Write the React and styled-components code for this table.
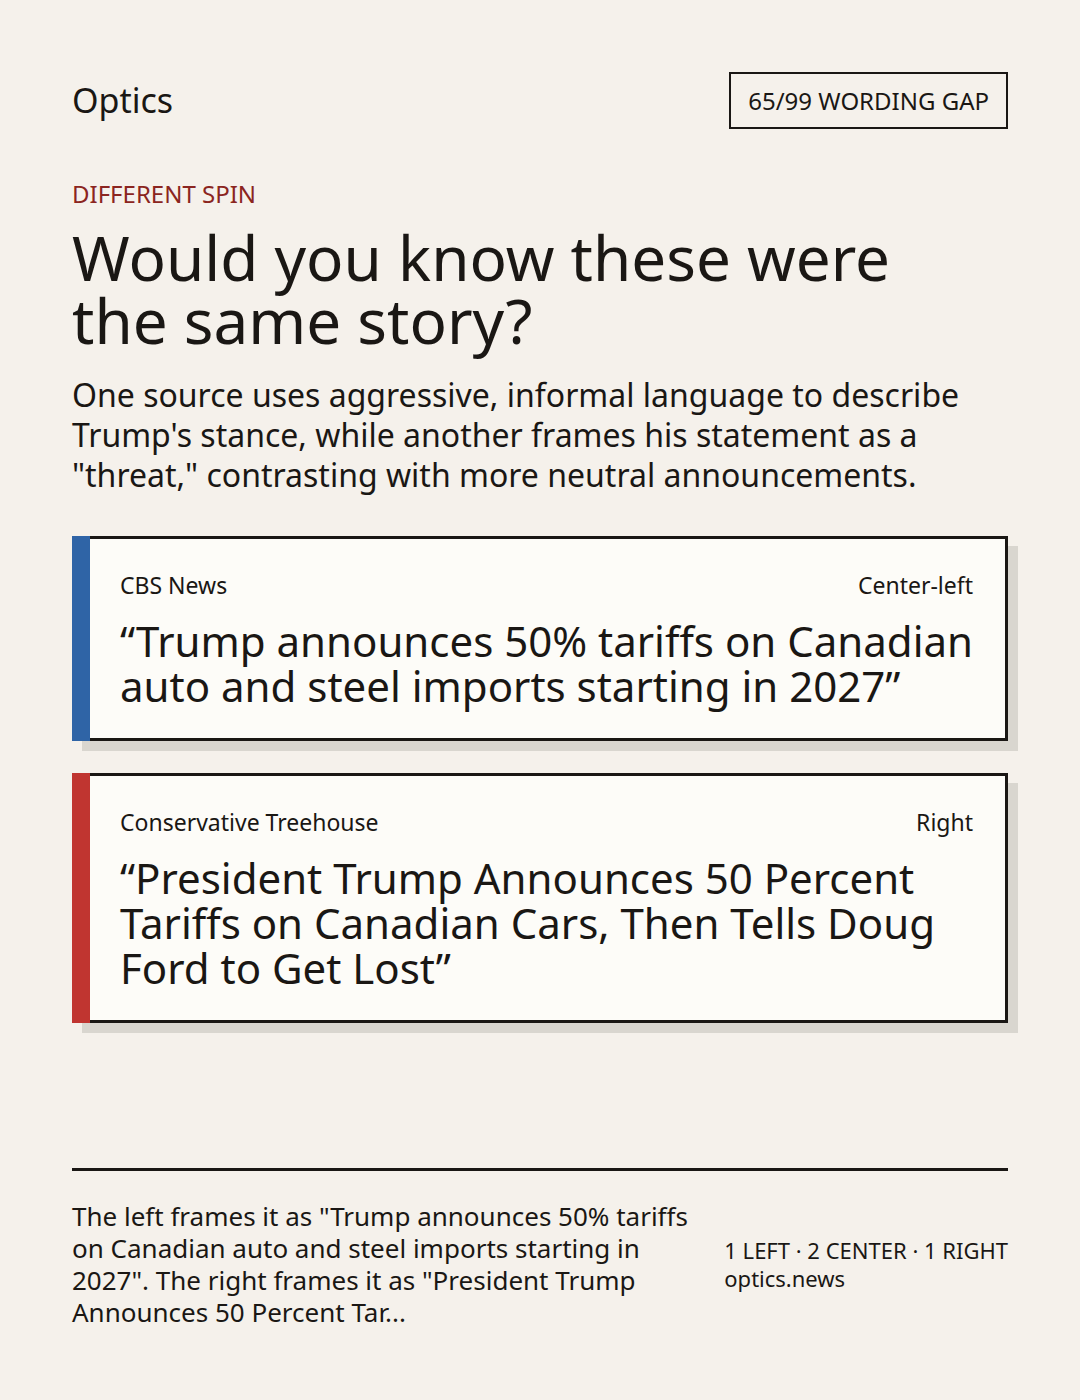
import React from "react";
import styled, { createGlobalStyle } from "styled-components";

const Global = createGlobalStyle`
  html, body { margin: 0; padding: 0; background: #f5f1eb; }
  body { font-family: "Noto Sans", "Open Sans", sans-serif; color: #1a1714; }
  * { box-sizing: border-box; }
`;

const Page = styled.div`
  min-height: 1400px;
  padding: 72px;
  display: flex;
  flex-direction: column;
`;

const Header = styled.header`
  display: flex;
  align-items: center;
  justify-content: space-between;
`;

const Brand = styled.div`
  font-size: 34px;
  line-height: 1.2;
`;

const Badge = styled.div`
  border: 2px solid #1a1714;
  padding: 11px 17px;
  font-size: 24px;
  line-height: 31px;
`;

const Eyebrow = styled.div`
  margin-top: 48px;
  font-size: 24px;
  line-height: 1.4;
  color: #8b2520;
`;

const Headline = styled.h1`
  margin: 15px 0 0;
  max-width: 880px;
  font-size: 62px;
  line-height: 63px;
  font-weight: 400;
`;

const Dek = styled.p`
  margin: 23px 0 0;
  font-size: 32px;
  line-height: 40px;
`;

const Cards = styled.div`
  margin-top: 41px;
  display: flex;
  flex-direction: column;
  gap: 32px;
`;

const Card = styled.div`
  display: flex;
  box-shadow: 10px 10px 0 #d9d6cf;
`;

const Bar = styled.div`
  width: 18px;
  flex: none;
  background: ${(p) => p.$color};
`;

const Body = styled.div`
  flex: 1;
  background: #fdfcf8;
  border: 3px solid #1a1714;
  border-left: none;
  padding: 30px 32px 30px 30px;
`;

const Meta = styled.div`
  display: flex;
  justify-content: space-between;
  font-size: 23px;
  line-height: 1.4;
`;

const Quote = styled.div`
  margin-top: 17px;
  font-size: 42px;
  line-height: 45px;
`;

const Footer = styled.footer`
  margin-top: auto;
  border-top: 3px solid #1a1714;
  padding-top: 29px;
  display: flex;
  align-items: center;
  gap: 32px;
`;

const Summary = styled.p`
  flex: 1;
  margin: 0;
  font-size: 26px;
  line-height: 32px;
`;

const Stats = styled.div`
  font-size: 22px;
  line-height: 28px;
  white-space: nowrap;
`;

const stories = [
  {
    color: "#2f64a6",
    source: "CBS News",
    lean: "Center-left",
    quote: "\u201cTrump announces 50% tariffs on Canadian auto and steel imports starting in 2027\u201d",
  },
  {
    color: "#c03530",
    source: "Conservative Treehouse",
    lean: "Right",
    quote:
      "\u201cPresident Trump Announces 50 Percent Tariffs on Canadian Cars, Then Tells Doug Ford to Get Lost\u201d",
  },
];

export default function App() {
  return (
    <>
      <Global />
      <Page>
        <Header>
          <Brand>Optics</Brand>
          <Badge>65/99 WORDING GAP</Badge>
        </Header>
        <Eyebrow>DIFFERENT SPIN</Eyebrow>
        <Headline>Would you know these were the same story?</Headline>
        <Dek>
          One source uses aggressive, informal language to describe Trump's stance, while another
          frames his statement as a "threat," contrasting with more neutral announcements.
        </Dek>
        <Cards>
          {stories.map((s) => (
            <Card key={s.source}>
              <Bar $color={s.color} />
              <Body>
                <Meta>
                  <span>{s.source}</span>
                  <span>{s.lean}</span>
                </Meta>
                <Quote>{s.quote}</Quote>
              </Body>
            </Card>
          ))}
        </Cards>
        <Footer>
          <Summary>
            The left frames it as "Trump announces 50% tariffs on Canadian auto and steel imports
            starting in 2027". The right frames it as "President Trump Announces 50 Percent Tar...
          </Summary>
          <Stats>
            1 LEFT · 2 CENTER · 1 RIGHT
            <br />
            optics.news
          </Stats>
        </Footer>
      </Page>
    </>
  );
}
